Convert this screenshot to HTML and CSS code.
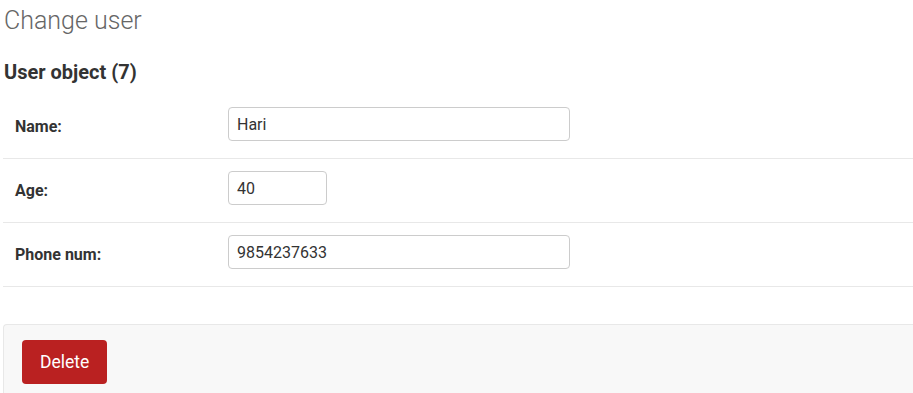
FILE: index.html
```html
<!DOCTYPE html>
<html>
    <head>
        <meta charset="utf8">
        <meta name="viewport" content="width=device-width">
        <title>Change user</title>
        <link rel="stylesheet" href="styles.css">
    </head>
    <body>
        <div class="content">
            <h1>Change user</h1>
            <h2>User object (7)</h2>
            <form>
                <fieldset class="module">
                    <div class="form-row">
                        <label for="id_name">Name:</label>
                        <input type="text" id="id_name" class="vTextField" value="Hari">
                    </div>
                    <div class="form-row">
                        <label for="id_age">Age:</label>
                        <input type="number" id="id_age" class="vIntegerField" value="40">
                    </div>
                    <div class="form-row">
                        <label for="id_phone_num">Phone num:</label>
                        <input type="text" id="id_phone_num" class="vTextField" value="9854237633">
                    </div>
                </fieldset>
                <div class="submit-row">
                    <a href="#" class="deletelink">Delete</a>
                </div>
            </form>
        </div>
    </body>
</html>
```

FILE: styles.css
```css
body{
    margin:0;
    font-family:Roboto, "Liberation Sans", sans-serif;
    color:#333;
    background:#fff;
}
.content{
    padding:0 0 0 3px;
}
h1{
    font-weight:300;
    font-size:25px;
    color:#666;
    margin:0;
    padding:5px 0 0 1px;
    line-height:32px;
}
h2{
    font-size:20px;
    font-weight:700;
    margin:0 0 11px 0;
    padding:23px 0 0 1px;
    line-height:24px;
}
fieldset{
    border:none;
    margin:0;
    padding:0;
}
.form-row{
    display:flex;
    align-items:flex-start;
    padding:12px 12px 17px 12px;
    border-bottom:1px solid #e8e8e8;
}
.form-row label{
    width:213px;
    margin-top:10px;
    font-size:16px;
    line-height:20px;
    font-weight:700;
    color:#333;
}
.form-row input{
    font-family:Roboto, "Liberation Sans", sans-serif;
    font-size:16px;
    color:#333;
    border:1px solid #ccc;
    border-radius:4px;
    height:34px;
    box-sizing:border-box;
    padding:2px 8px;
    margin:0;
}
.vTextField{
    width:342px;
}
.vIntegerField{
    width:99px;
    -moz-appearance:textfield;
}
.vIntegerField::-webkit-inner-spin-button{
    -webkit-appearance:none;
}
.submit-row{
    margin-top:37px;
    padding:15px 18px 0 18px;
    background:#f8f8f8;
    border:1px solid #e8e8e8;
    border-right:none;
    border-bottom:none;
    border-radius:4px 0 0 0;
    height:53px;
}
.deletelink{
    display:inline-block;
    background:#ba2121;
    color:#fff;
    text-decoration:none;
    font-size:17.5px;
    line-height:44px;
    height:44px;
    padding:0 18px;
    border-radius:4px;
}
```
